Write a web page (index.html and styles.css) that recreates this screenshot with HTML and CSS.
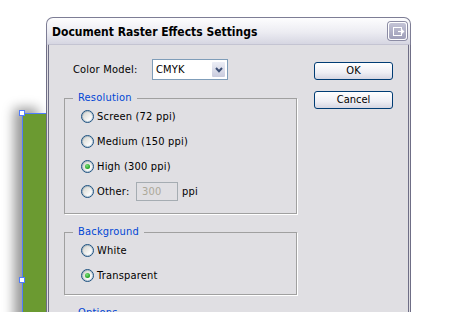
FILE: index.html
```html
<!DOCTYPE html>
<html lang="en">
<head>
    <meta charset="UTF-8">
    <meta name="viewport" content="width=device-width, initial-scale=1.0">
    <title>Document Raster Effects Settings</title>
    <link rel="stylesheet" href="styles.css">
</head>
<body>
    <div class="desk">
        <div class="art">
            <span class="handle handle-top"></span>
            <span class="handle handle-mid"></span>
        </div>
        <div class="dialog">
            <div class="titlebar">
                <span class="title">Document Raster Effects Settings</span>
                <span class="close">
                    <svg width="17" height="16" viewBox="0 0 17 16">
                        <rect x="4.5" y="4.5" width="8" height="8" fill="none" stroke="#fff" stroke-width="1"/>
                        <path d="M9 8.5 H14" stroke="#fff" stroke-width="1.2"/>
                        <path d="M12 6 L14.6 8.5 L12 11" fill="none" stroke="#fff" stroke-width="1.2"/>
                    </svg>
                </span>
            </div>
            <div class="content">
                <div class="main">
                    <div class="model">
                        <span class="model-label">Color Model:</span>
                        <div class="select">
                            <span class="select-text">CMYK</span>
                            <span class="arrow">
                                <svg width="8" height="6" viewBox="0 0 8 6">
                                    <path d="M1 1 L4 4.2 L7 1" fill="none" stroke="#3d4f75" stroke-width="2"/>
                                </svg>
                            </span>
                        </div>
                    </div>

                    <div class="group group-resolution">
                        <span class="legend">Resolution</span>
                        <div class="radio-row"><span class="radio"></span>Screen (72 ppi)</div>
                        <div class="radio-row"><span class="radio"></span>Medium (150 ppi)</div>
                        <div class="radio-row"><span class="radio on"><span class="dot"></span></span>High (300 ppi)</div>
                        <div class="radio-row">
                            <span class="radio"></span>
                            <span class="other-label">Other:</span>
                            <span class="field">300</span>
                            <span>ppi</span>
                        </div>
                    </div>

                    <div class="group group-background">
                        <span class="legend">Background</span>
                        <div class="radio-row"><span class="radio"></span>White</div>
                        <div class="radio-row"><span class="radio on"><span class="dot"></span></span>Transparent</div>
                    </div>

                    <div class="group group-options">
                        <span class="legend">Options</span>
                        <div class="radio-row"></div>
                    </div>
                </div>
                <div class="side">
                    <button class="btn" type="button">OK</button>
                    <button class="btn" type="button">Cancel</button>
                </div>
            </div>
        </div>
    </div>
</body>
</html>
```

FILE: styles.css
```css
body {
    margin: 0;
    background-color: #fff;
    font-family: "DejaVu Sans Condensed", "DejaVu Sans", sans-serif;
    font-stretch: condensed;
    font-size: 11px;
    letter-spacing: 0.2px;
    color: #000;
    overflow: hidden;
}
.desk {
    position: relative;
    width: 450px;
    height: 312px;
    overflow: hidden;
}
.art {
    position: absolute;
    left: 22px;
    top: 113px;
    width: 24px;
    height: 400px;
    box-sizing: border-box;
    background-color: #6b9a31;
    border-left: 1px solid #4f7cff;
    border-top: 1px solid #4f7cff;
    box-shadow: -8px -5px 12px rgba(0,0,0,0.4);
}
.handle {
    position: absolute;
    left: -4px;
    width: 6px;
    height: 6px;
    box-sizing: border-box;
    background-color: #fff;
    border: 1px solid #4f7cff;
}
.handle-top {
    top: -4px;
}
.handle-mid {
    top: 163px;
}
.dialog {
    position: absolute;
    left: 46px;
    top: 17px;
    width: 365px;
}
.titlebar {
    height: 27px;
    box-sizing: border-box;
    display: flex;
    justify-content: space-between;
    align-items: flex-start;
    padding: 0 3px 0 5px;
    border: 1px solid #7d7d95;
    border-bottom: 0;
    border-radius: 7px 7px 0 0;
    background: linear-gradient(#fdfdfe, #ececf2 55%, #d6d6e2);
}
.title {
    margin-top: 6px;
    font-size: 12px;
    font-weight: bold;
    line-height: 16px;
    letter-spacing: 0;
}
.close {
    margin-top: 4px;
    width: 19px;
    height: 18px;
    box-sizing: border-box;
    display: flex;
    align-items: center;
    justify-content: center;
    border: 1px solid #fff;
    border-radius: 3px;
    background: linear-gradient(#c4c4d6, #9e9eb8);
    box-shadow: 0 0 0 1px #8c8ca4;
}
.content {
    display: flex;
    height: 300px;
    padding: 14px 0 0 15px;
    background-color: #e0dfe3;
    border-left: 3px double #6f6e86;
    border-right: 3px double #6f6e86;
    border-top: 1px solid #c4c4d2;
}
.main {
    width: 233px;
}
.model {
    display: flex;
    align-items: center;
    height: 21px;
}
.model-label {
    margin-left: 9px;
    width: 79px;
}
.select {
    width: 76px;
    height: 21px;
    box-sizing: border-box;
    display: flex;
    align-items: center;
    justify-content: space-between;
    padding: 1px;
    border: 1px solid #7f9db9;
    background-color: #fff;
}
.select-text {
    padding-left: 2px;
}
.arrow {
    width: 15px;
    height: 17px;
    box-sizing: border-box;
    display: flex;
    align-items: center;
    justify-content: center;
    border: 1px solid #fff;
    border-radius: 2px;
    background: linear-gradient(#eceef6, #c9cbdd);
}
.group {
    position: relative;
    width: 233px;
    box-sizing: border-box;
    display: flex;
    flex-direction: column;
    gap: 6px;
    margin-top: 18px;
    padding: 8px 0 12px 16px;
    border: 1px solid #a0a0a0;
    box-shadow: 1px 1px 0 #fff;
}
.group-background {
    padding-bottom: 9px;
}
.legend {
    position: absolute;
    top: -8px;
    left: 8px;
    padding: 0 5px;
    line-height: 13px;
    background-color: #e0dfe3;
    color: #0046d5;
}
.radio-row {
    display: flex;
    align-items: center;
    height: 19px;
}
.radio {
    width: 13px;
    height: 13px;
    box-sizing: border-box;
    display: flex;
    align-items: center;
    justify-content: center;
    margin-right: 3px;
    border: 1px solid #1c5180;
    border-radius: 50%;
    background: linear-gradient(135deg, #cfcfc8, #fff 80%);
    box-shadow: inset 0 0 0 1px rgba(28,81,128,0.25);
}
.dot {
    width: 5px;
    height: 5px;
    border-radius: 50%;
    background: radial-gradient(circle at 40% 35%, #7ee07e, #21a121 70%);
}
.other-label {
    width: 39px;
}
.field {
    width: 42px;
    height: 19px;
    box-sizing: border-box;
    margin-right: 4px;
    padding-left: 5px;
    line-height: 17px;
    border: 1px solid #a5acb2;
    color: #aca899;
}
.side {
    display: flex;
    flex-direction: column;
    gap: 11px;
    margin-left: 17px;
    padding-top: 3px;
}
.btn {
    width: 79px;
    height: 18px;
    box-sizing: border-box;
    padding: 0;
    font: inherit;
    line-height: 16px;
    color: #000;
    border: 1px solid #003c74;
    border-radius: 3px;
    background: linear-gradient(#ffffff, #eeeef4 60%, #d6d6e2);
}
```
